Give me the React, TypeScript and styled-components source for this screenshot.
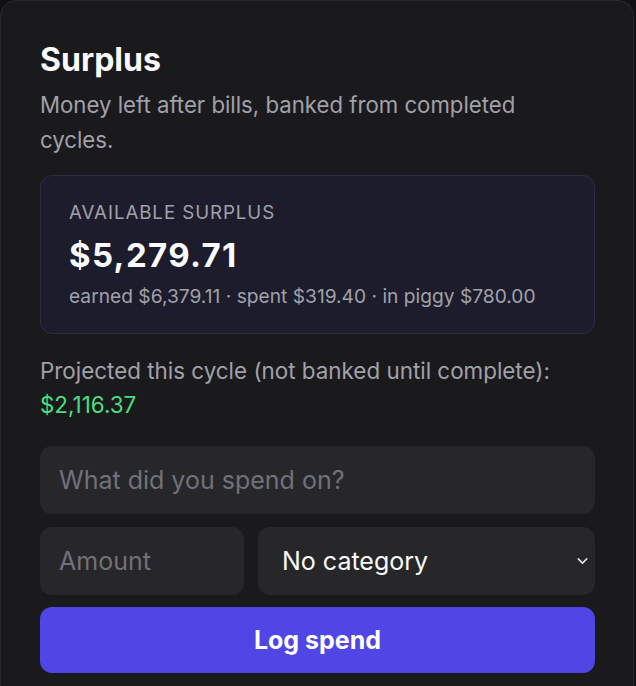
import styled, { createGlobalStyle } from 'styled-components';

const GlobalStyle = createGlobalStyle`
  html, body {
    margin: 0;
    padding: 0;
    background: #111113;
  }
  * {
    box-sizing: border-box;
  }
`;

const Card = styled.section`
  width: 634px;
  min-height: 720px;
  background: #1a1a1d;
  border: 1px solid #2a2a2e;
  border-radius: 16px;
  padding: 38px 38px 40px 39px;
  font-family: Inter, 'Liberation Sans', sans-serif;
  color: #f4f4f5;
`;

const Title = styled.h2`
  margin: 0;
  font-size: 32px;
  font-weight: 700;
  line-height: 42px;
  color: #fafafa;
`;

const Subtitle = styled.p`
  margin: 6px 0 0;
  max-width: 520px;
  font-size: 22.2px;
  line-height: 35px;
  color: #a1a1aa;
`;

const SummaryBox = styled.div`
  margin-top: 18px;
  background: #1c1c2c;
  border: 1px solid #2c2c42;
  border-radius: 12px;
  padding: 25px 28px 23px;
`;

const Label = styled.div`
  font-size: 18.7px;
  letter-spacing: 0.05em;
  line-height: 24px;
  color: #a1a1aa;
  text-transform: uppercase;
`;

const Amount = styled.div`
  margin-top: 8px;
  font-size: 33px;
  font-weight: 700;
  letter-spacing: 0.04em;
  line-height: 44px;
  color: #fafafa;
`;

const Breakdown = styled.div`
  margin-top: 5px;
  font-size: 19.2px;
  line-height: 28px;
  color: #a1a1aa;
`;

const Projected = styled.p`
  margin: 20px 0 0;
  font-size: 22.4px;
  line-height: 34px;
  color: #a1a1aa;
`;

const Positive = styled.span`
  display: block;
  color: #4ade80;
`;

const Form = styled.form`
  margin-top: 24px;
  display: flex;
  flex-direction: column;
  gap: 13px;
`;

const Row = styled.div`
  display: grid;
  grid-template-columns: 204px 1fr;
  gap: 14px;
`;

const Field = styled.input`
  width: 100%;
  height: 68px;
  border: none;
  border-radius: 12px;
  background: #27272a;
  padding: 0 19px;
  font-family: inherit;
  font-size: 25px;
  color: #fafafa;
  outline: none;

  &::placeholder {
    color: #71717a;
  }
`;

const SelectWrap = styled.div`
  position: relative;
`;

const Select = styled.select`
  width: 100%;
  height: 68px;
  border: none;
  border-radius: 12px;
  background: #27272a;
  padding: 0 20px 0 24px;
  font-family: inherit;
  font-size: 25px;
  color: #fafafa;
  appearance: none;
  outline: none;
`;

const Chevron = styled.svg`
  position: absolute;
  right: 4px;
  top: 50%;
  transform: translateY(-50%);
  pointer-events: none;
`;

const SubmitButton = styled.button`
  height: 66px;
  margin-top: -1px;
  border: none;
  border-radius: 12px;
  background: #4f46e5;
  color: #ffffff;
  font-family: inherit;
  font-size: 25px;
  font-weight: 700;
`;

export default function App() {
  return (
    <>
      <GlobalStyle />
      <Card>
        <Title>Surplus</Title>
        <Subtitle>Money left after bills, banked from completed cycles.</Subtitle>
        <SummaryBox>
          <Label>Available surplus</Label>
          <Amount>$5,279.71</Amount>
          <Breakdown>earned $6,379.11 · spent $319.40 · in piggy $780.00</Breakdown>
        </SummaryBox>
        <Projected>
          Projected this cycle (not banked until complete):
          <Positive>$2,116.37</Positive>
        </Projected>
        <Form onSubmit={(e) => e.preventDefault()}>
          <Field placeholder="What did you spend on?" />
          <Row>
            <Field placeholder="Amount" inputMode="decimal" />
            <SelectWrap>
              <Select defaultValue="">
                <option value="">No category</option>
              </Select>
              <Chevron width="17" height="17" viewBox="0 0 24 24" fill="none" stroke="#e4e4e7" strokeWidth="2.2" strokeLinecap="round" strokeLinejoin="round">
                <path d="m6 9 6 6 6-6" />
              </Chevron>
            </SelectWrap>
          </Row>
          <SubmitButton type="submit">Log spend</SubmitButton>
        </Form>
      </Card>
    </>
  );
}
